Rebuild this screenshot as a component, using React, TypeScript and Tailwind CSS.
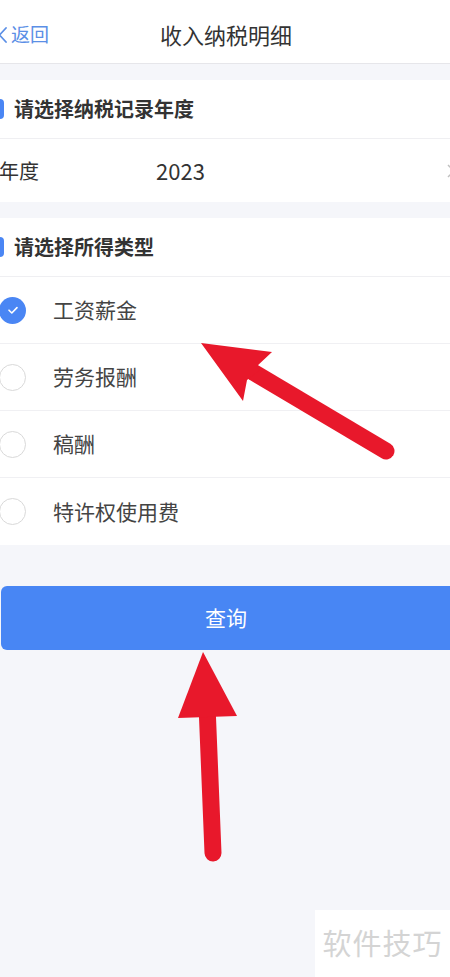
import React from "react";

const font = { fontFamily: '"Noto Sans CJK SC", "Noto Sans", sans-serif' };

function Radio({ checked }: { checked?: boolean }) {
  if (checked) {
    return (
      <div className="w-[27px] h-[27px] rounded-full bg-[#4a86f4] flex items-center justify-center">
        <svg width="14" height="14" viewBox="0 0 14 14" fill="none">
          <path d="M3 7.2l2.8 2.8L11 4.6" stroke="white" strokeWidth="1.6" strokeLinecap="round" strokeLinejoin="round" />
        </svg>
      </div>
    );
  }
  return <div className="w-[27px] h-[27px] rounded-full border-[1.5px] border-[#d9d9d9] bg-white" />;
}

function SectionTitle({ text }: { text: string }) {
  return (
    <div className="h-[59px] flex items-center border-b border-[#efeff2]">
      <div className="w-[4px] h-[20px] bg-[#4a86f4] rounded-r-sm" />
      <span className="ml-[10px] text-[20px] font-bold text-[#333]">{text}</span>
    </div>
  );
}

export default function App() {
  const items = ["工资薪金", "劳务报酬", "稿酬", "特许权使用费"];
  return (
    <div className="relative w-[450px] h-[977px] overflow-hidden bg-[#f5f6fa]" style={font}>
      {/* Header */}
      <div className="h-[64px] pt-[6px] bg-white border-b border-[#e6e6ea] relative flex items-center">
        <div className="flex items-center text-[#5b8fe6]">
          <svg width="10" height="18" viewBox="0 0 10 18" fill="none" className="ml-[-2px]">
            <path d="M8 2L1.5 9L8 16" stroke="#5b8fe6" strokeWidth="1.8" strokeLinecap="round" strokeLinejoin="round" />
          </svg>
          <span className="ml-[3px] text-[19px]">返回</span>
        </div>
        <div className="absolute left-0 right-0 top-[6px] bottom-0 flex items-center justify-center pointer-events-none">
          <span className="text-[22px] text-[#333] ml-[2px]">收入纳税明细</span>
        </div>
      </div>

      {/* Section 1 */}
      <div className="mt-[16px] bg-white">
        <SectionTitle text="请选择纳税记录年度" />
        <div className="h-[63px] flex items-center">
          <span className="w-[157px] text-[20px] text-[#333] ml-[-1px]">年度</span>
          <span className="text-[22px] text-[#333]">2023</span>
          <div className="flex-1" />
          <svg width="8" height="14" viewBox="0 0 8 14" className="mr-[-5px]">
            <path d="M1 1l6 6-6 6" stroke="#c0c0c0" strokeWidth="1.5" fill="none" />
          </svg>
        </div>
      </div>

      {/* Section 2 */}
      <div className="mt-[16px] bg-white">
        <SectionTitle text="请选择所得类型" />
        {items.map((t, i) => (
          <div
            key={t}
            className={`h-[67px] flex items-center ${i < items.length - 1 ? "border-b border-[#f0f0f3]" : ""}`}
          >
            <div className="ml-[-1px]">
              <Radio checked={i === 0} />
            </div>
            <span className="ml-[27px] text-[21px] text-[#444]">{t}</span>
          </div>
        ))}
      </div>

      {/* Button */}
      <div className="mt-[41px] pl-[1px] pr-0 mr-[-8px]">
        <div className="h-[64px] rounded-[6px] bg-[#4886f4] flex items-center justify-center">
          <span className="text-[21px] text-white mr-[7px]">查询</span>
        </div>
      </div>

      {/* Watermark */}
      <div className="absolute left-[315px] top-[910px] w-[135px] h-[67px] bg-white flex items-center justify-center">
        <span className="text-[29px] text-[#d4d4d4] tracking-[1px] mt-[-2px]">软件技巧</span>
      </div>

      {/* Arrows */}
      <svg className="absolute left-0 top-0 pointer-events-none" width="450" height="977" viewBox="0 0 450 977">
        <line x1="253" y1="372" x2="386" y2="451" stroke="#e8182b" strokeWidth="17" strokeLinecap="round" />
        <polygon points="201,343 272,352 256,367 260,370 247,380 243,401" fill="#e8182b" />
        <line x1="207" y1="705" x2="213" y2="853" stroke="#e8182b" strokeWidth="17" strokeLinecap="round" />
        <polygon points="203,652 237,716 178,718" fill="#e8182b" />
      </svg>
    </div>
  );
}
